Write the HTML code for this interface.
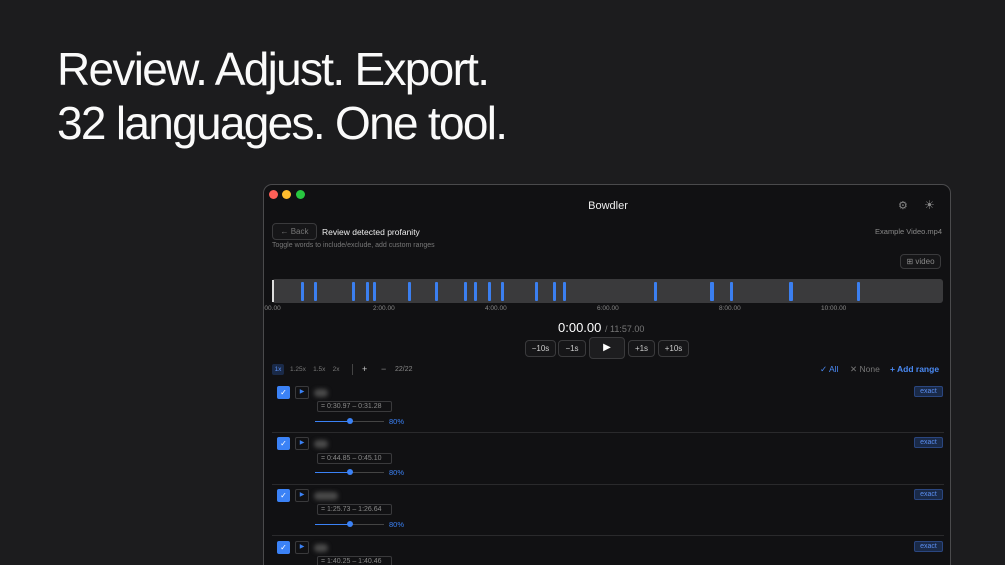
<!DOCTYPE html>
<html><head><meta charset="utf-8"><style>
*{margin:0;padding:0;box-sizing:border-box}
html{width:1005px;height:565px;overflow:hidden}
body{width:1005px;height:565px;background:#1c1c1e;overflow:hidden;position:relative;font-family:"Liberation Sans",sans-serif;color:#fff}
.h{position:absolute;left:57px;font-size:46px;letter-spacing:-1.7px;color:#fafafa;white-space:nowrap}
.win{position:absolute;left:263px;top:184px;width:688px;height:390px;background:#111113;border:1px solid #4a4a4c;border-radius:9px;overflow:hidden}
.a{position:absolute;white-space:nowrap}
.dot{position:absolute;top:5px;width:9px;height:9px;border-radius:50%}
.btn{position:absolute;border:1px solid #3a3a3c;border-radius:4px;background:#161618;color:#ccc;font-size:8px;text-align:center}
.tick{position:absolute;top:97px;width:3px;height:19px;background:#3b7ff0;border-radius:1px}
.lbl{position:absolute;top:120px;font-size:6.5px;color:#888}
.cb{position:absolute;left:13px;width:13px;height:13px;background:#3b82f6;border-radius:2px;color:#fff;font-size:8px;text-align:center;line-height:13px}
.pb{position:absolute;left:31px;width:14px;height:13px;border:1px solid #3a3a3c;border-radius:2px;color:#3b82f6;font-size:6px;text-align:center;line-height:11px}
.blur{position:absolute;left:50px;height:8px;background:#4a4a4a;border-radius:4px;filter:blur(2px)}
.rg{position:absolute;left:53px;width:75px;height:11px;border:1px solid #3a3a3c;border-radius:2px;font-size:7px;color:#8a8a8a;line-height:9px;padding-left:3px}
.sl{position:absolute;left:51px;width:69px;height:1px;background:#444}
.sl i{position:absolute;left:0;top:0;width:35px;height:1px;background:#3b82f6}
.sl b{position:absolute;left:32px;top:-3px;width:6px;height:6px;border-radius:50%;background:#3b82f6}
.pc{position:absolute;left:125px;font-size:7.5px;color:#3b82f6}
.ex{position:absolute;left:650px;width:29px;height:11px;background:#1a2a48;border:1px solid #2a4680;border-radius:2px;color:#5b8ef0;font-size:7px;text-align:center;line-height:9px}
.sep{position:absolute;left:8px;width:672px;height:1px;background:#2a2a2c}
</style></head><body>
<div class="h" style="top:42px">Review. Adjust. Export.</div>
<div class="h" style="top:96px">32 languages. One tool.</div>
<div class="win">
<div class="dot" style="left:5px;background:#fe5f57"></div>
<div class="dot" style="left:18px;background:#febc2e"></div>
<div class="dot" style="left:32px;background:#28c840"></div>
<div class="a" style="left:0;width:688px;text-align:center;top:15px;font-size:11px;color:#eee">Bowdler</div>
<div class="a" style="left:634px;top:14px;font-size:11px;color:#888">⚙</div>
<div class="a" style="left:660px;top:13px;font-size:12px;color:#888">☀</div>
<div class="btn" style="left:8px;top:38px;width:45px;height:17px;line-height:15px;color:#777">← Back</div>
<div class="a" style="left:58px;top:42px;font-size:8.5px;color:#eee">Review detected profanity</div>
<div class="a" style="right:8px;top:42px;font-size:7.5px;color:#888">Example Video.mp4</div>
<div class="a" style="left:8px;top:57px;font-size:7px;color:#777">Toggle words to include/exclude, add custom ranges</div>
<div class="btn" style="left:636px;top:69px;width:41px;height:15px;line-height:13px;color:#888">⊞ video</div>
<div class="a" style="left:8px;top:94px;width:671px;height:24px;background:#3a3a3c;border-radius:3px"></div>
<div class="a" style="left:8px;top:95px;width:2px;height:22px;background:#ddd"></div>
<div class="tick" style="left:37px"></div><div class="tick" style="left:50px"></div><div class="tick" style="left:88px"></div><div class="tick" style="left:102px"></div><div class="tick" style="left:109px"></div><div class="tick" style="left:144px"></div><div class="tick" style="left:171px"></div><div class="tick" style="left:200px"></div><div class="tick" style="left:210px"></div><div class="tick" style="left:224px"></div><div class="tick" style="left:237px"></div><div class="tick" style="left:271px"></div><div class="tick" style="left:289px"></div><div class="tick" style="left:299px"></div><div class="tick" style="left:390px"></div><div class="tick" style="left:446px;width:4px"></div><div class="tick" style="left:466px"></div><div class="tick" style="left:525px;width:4px"></div><div class="tick" style="left:593px"></div>
<div class="lbl" style="left:-5px">0:00.00</div><div class="lbl" style="left:109px">2:00.00</div><div class="lbl" style="left:221px">4:00.00</div><div class="lbl" style="left:333px">6:00.00</div><div class="lbl" style="left:455px">8:00.00</div><div class="lbl" style="left:557px">10:00.00</div>
<div class="a" style="left:294px;top:135px;font-size:13px;color:#fff">0:00.00 <span style="font-size:9px;color:#777">/ 11:57.00</span></div>
<div class="btn" style="left:261px;top:155px;width:31px;height:17px;line-height:15px">−10s</div>
<div class="btn" style="left:294px;top:155px;width:28px;height:17px;line-height:15px">−1s</div>
<div class="btn" style="left:325px;top:152px;width:36px;height:22px;line-height:20px;font-size:10px;color:#fff;background:#1d1d1f">▶</div>
<div class="btn" style="left:364px;top:155px;width:27px;height:17px;line-height:15px">+1s</div>
<div class="btn" style="left:394px;top:155px;width:31px;height:17px;line-height:15px">+10s</div>
<div class="a" style="left:8px;top:179px;width:12px;height:11px;background:#1a2a48;border-radius:2px;font-size:6.5px;color:#5b8ef0;text-align:center;line-height:11px">1x</div>
<div class="a" style="left:26px;top:181px;font-size:6.5px;color:#777">1.25x &nbsp;&nbsp; 1.5x &nbsp;&nbsp; 2x</div>
<div class="a" style="left:88px;top:179px;width:1px;height:11px;background:#444"></div>
<div class="a" style="left:98px;top:179px;font-size:9px;color:#ccc">+</div>
<div class="a" style="left:117px;top:179px;font-size:9px;color:#888">−</div>
<div class="a" style="left:131px;top:181px;font-size:7px;color:#888">22/22</div>
<div class="a" style="left:556px;top:179px;font-size:8.5px;color:#4a8af4">✓ All</div>
<div class="a" style="left:586px;top:179px;font-size:8.5px;color:#777">✕ None</div>
<div class="a" style="left:626px;top:179px;font-size:8.5px;color:#4a8af4;font-weight:bold">+ Add range</div>

<div class="cb" style="top:201px">✓</div><div class="pb" style="top:201px">▶</div><div class="blur" style="top:204px;width:14px"></div>
<div class="rg" style="top:216px">= 0:30.97 – 0:31.28</div>
<div class="sl" style="top:236px"><i></i><b></b></div><div class="pc" style="top:232px">80%</div>
<div class="ex" style="top:201px">exact</div>
<div class="sep" style="top:247px"></div>

<div class="cb" style="top:252px">✓</div><div class="pb" style="top:252px">▶</div><div class="blur" style="top:255px;width:14px"></div>
<div class="rg" style="top:268px">= 0:44.85 – 0:45.10</div>
<div class="sl" style="top:287px"><i></i><b></b></div><div class="pc" style="top:283px">80%</div>
<div class="ex" style="top:252px">exact</div>
<div class="sep" style="top:299px"></div>

<div class="cb" style="top:304px">✓</div><div class="pb" style="top:304px">▶</div><div class="blur" style="top:307px;width:24px"></div>
<div class="rg" style="top:319px">= 1:25.73 – 1:26.64</div>
<div class="sl" style="top:339px"><i></i><b></b></div><div class="pc" style="top:335px">80%</div>
<div class="ex" style="top:304px">exact</div>
<div class="sep" style="top:350px"></div>

<div class="cb" style="top:356px">✓</div><div class="pb" style="top:356px">▶</div><div class="blur" style="top:359px;width:14px"></div>
<div class="rg" style="top:371px">= 1:40.25 – 1:40.46</div>
<div class="ex" style="top:356px">exact</div>
</div>
</body></html>
